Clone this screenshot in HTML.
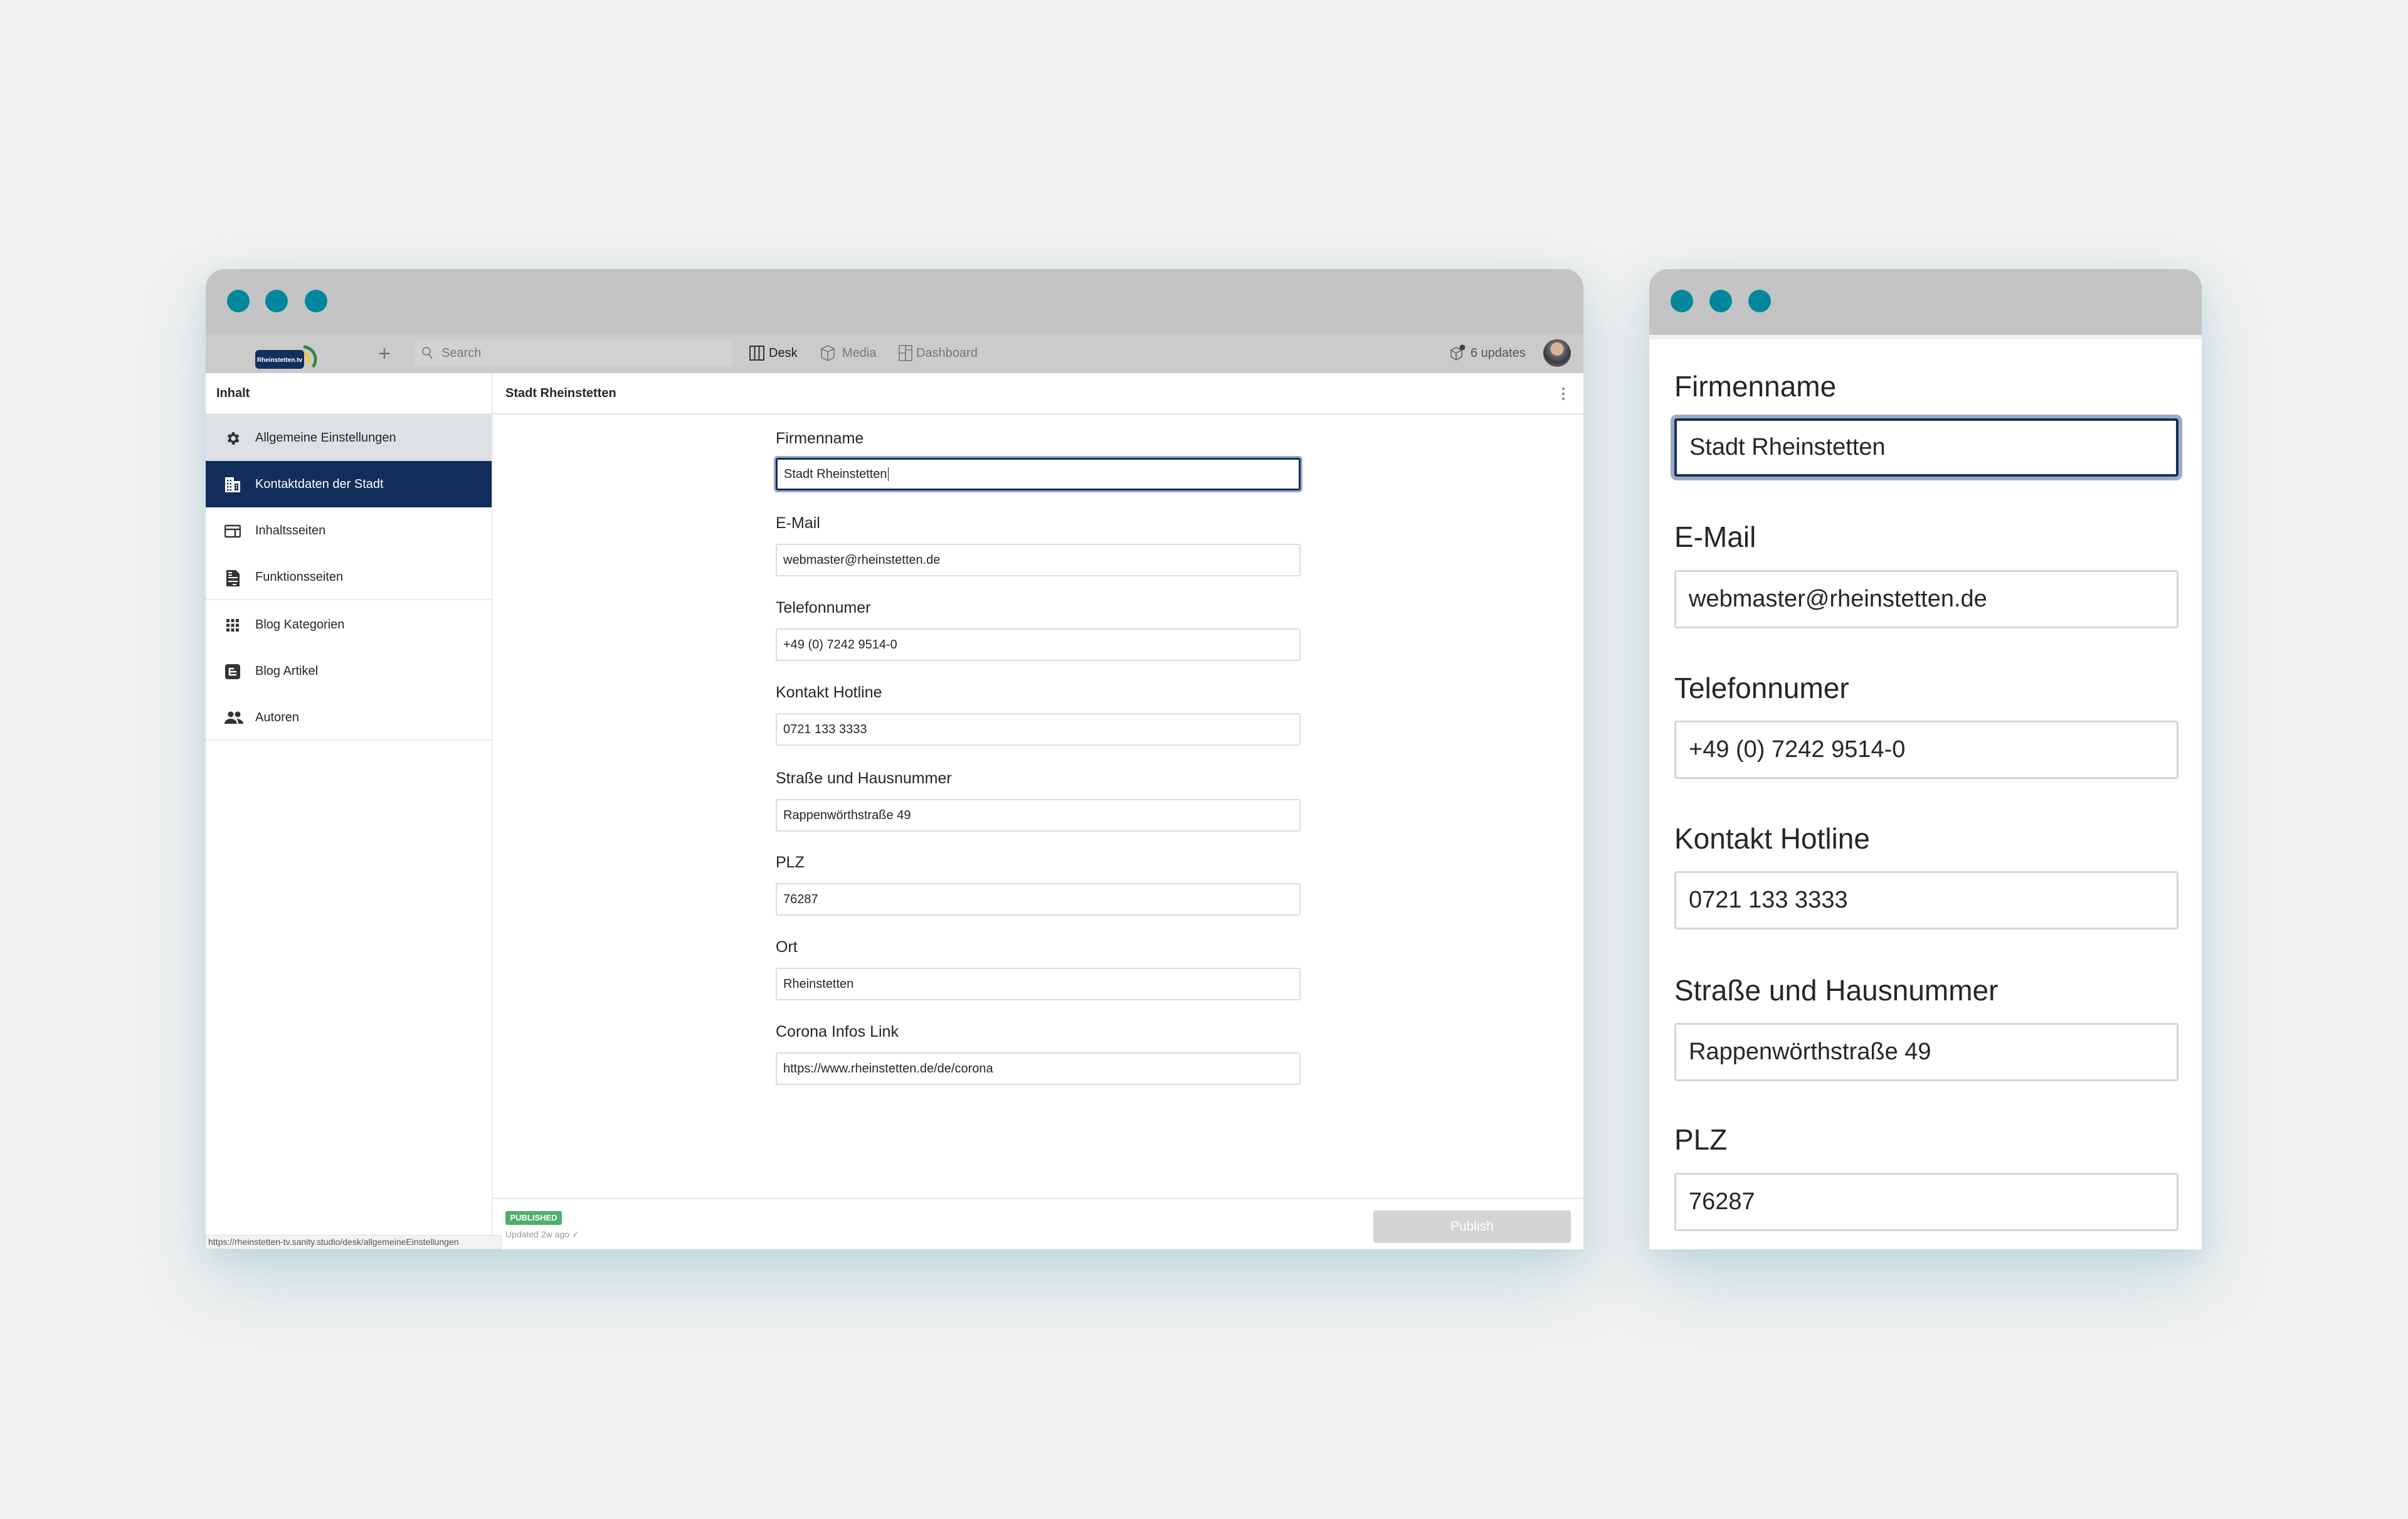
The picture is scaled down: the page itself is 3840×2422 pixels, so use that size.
<!DOCTYPE html>
<html><head><meta charset="utf-8"><style>
*{margin:0;padding:0;box-sizing:border-box}
body{width:3840px;height:2422px;background:#f1f1f1;font-family:"Liberation Sans",Arial,sans-serif;position:relative;overflow:hidden;color:#262626}
.win{position:absolute;background:#fff;border-radius:30px 30px 0 0;overflow:hidden;box-shadow:0 50px 110px rgba(150,195,205,.45),0 10px 40px rgba(150,195,205,.3)}
.tb{position:absolute;left:0;top:0;right:0;background:#c4c4c4}
.dot{position:absolute;width:36px;height:36px;border-radius:50%;background:#00879b;top:33px}
.abs{position:absolute}
.lbl{position:absolute;font-size:25px;color:#262626;left:909px}
.inp{position:absolute;left:909px;width:837px;height:52px;border:2px solid #dcdcdc;border-radius:3px;font-size:20px;padding-left:10px;line-height:48px;color:#262626}
.si{position:absolute;left:0;width:456px;height:74px;font-size:20px;line-height:74px;padding-left:79px;color:#262626}
.si svg{position:absolute;left:30px;top:25px}
.rl{position:absolute;left:40px;font-size:46px;color:#262626}
.ri{position:absolute;left:40px;width:804px;height:93px;border:3px solid #d6d6d6;border-radius:4px;font-size:38px;line-height:87px;padding-left:20px;color:#262626}
</style></head><body>

<!-- LEFT WINDOW -->
<div class="win" style="left:328px;top:429px;width:2197px;height:1563px">
  <div class="tb" style="height:104px"></div>
  <div class="dot" style="left:34px"></div>
  <div class="dot" style="left:95px"></div>
  <div class="dot" style="left:158px"></div>
  <!-- toolbar -->
  <div class="abs" style="left:0;top:104px;width:2197px;height:62px;background:#cbcbcb"></div>
  <!-- logo -->
  <svg class="abs" style="left:78px;top:112px" width="105" height="50" viewBox="0 0 105 50">
    <path d="M78 12 A20 20 0 0 1 93 44" fill="none" stroke="#2f8a4e" stroke-width="5"/>
    <path d="M76 20 A12 12 0 0 1 84 38" fill="none" stroke="#f0c93a" stroke-width="5"/>
    <rect x="1" y="17" width="78" height="30" rx="6" fill="#12305e"/>
    <circle cx="76" cy="23" r="3" fill="#12305e"/>
    <text x="40" y="36" font-size="10" font-weight="bold" fill="#fff" text-anchor="middle" font-family="Liberation Sans">Rheinstetten.tv</text>
  </svg>
  <div class="abs" style="left:275px;top:116px;font-size:34px;color:#777;font-weight:300">+</div>
  <div class="abs" style="left:333px;top:112px;width:507px;height:44px;background:#d2d2d2;border-radius:6px"></div>
  <svg class="abs" style="left:344px;top:123px" width="20" height="22" viewBox="0 0 20 22"><circle cx="8" cy="8" r="6" fill="none" stroke="#777" stroke-width="1.6"/><path d="M12 13l5 7" stroke="#777" stroke-width="1.6"/></svg>
  <div class="abs" style="left:376px;top:123px;font-size:20px;color:#777">Search</div>
  <svg class="abs" style="left:867px;top:122px" width="24" height="24" viewBox="0 0 24 24"><rect x="1" y="1" width="22" height="22" fill="none" stroke="#333" stroke-width="2"/><path d="M8.5 1v22M15.5 1v22" stroke="#333" stroke-width="2"/></svg>
  <div class="abs" style="left:898px;top:123px;font-size:20px;color:#222">Desk</div>
  <svg class="abs" style="left:981px;top:121px" width="22" height="26" viewBox="0 0 22 26"><path d="M11 1L21 6v14L11 25 1 20V6z M1 6l10 5 10-5 M11 11v14" fill="none" stroke="#777" stroke-width="1.6"/></svg>
  <div class="abs" style="left:1015px;top:123px;font-size:20px;color:#777">Media</div>
  <svg class="abs" style="left:1105px;top:121px" width="22" height="26" viewBox="0 0 22 26"><rect x="1" y="1" width="20" height="24" fill="none" stroke="#777" stroke-width="1.6"/><path d="M11 1v24M1 13h10M11 8h10" stroke="#777" stroke-width="1.6"/></svg>
  <div class="abs" style="left:1133px;top:123px;font-size:20px;color:#777">Dashboard</div>
  <svg class="abs" style="left:1984px;top:120px" width="26" height="28" viewBox="0 0 26 28"><path d="M10 5L19 9v11l-9 5-8-5V9z M2 9l8 5 9-5 M10 14v11" fill="none" stroke="#666" stroke-width="1.6"/><circle cx="20" cy="5" r="4.5" fill="#444"/></svg>
  <div class="abs" style="left:2017px;top:123px;font-size:20px;color:#555">6 updates</div>
  <div class="abs" style="left:2133px;top:112px;width:44px;height:44px;border-radius:50%;background:radial-gradient(circle at 50% 35%,#d9b49b 0 28%,#6b6b6b 30%,#3a3a44 60%,#888 100%)"></div>

  <!-- header row -->
  <div class="abs" style="left:0;top:166px;width:2197px;height:66px;border-bottom:2px solid #e6e6e6"></div>
  <div class="abs" style="left:17px;top:187px;font-size:20px;font-weight:bold">Inhalt</div>
  <div class="abs" style="left:478px;top:187px;font-size:20px;font-weight:bold">Stadt Rheinstetten</div>
  <div class="abs" style="left:2163px;top:189px;width:4px;height:4px;border-radius:50%;background:#888;box-shadow:0 8px 0 #888,0 16px 0 #888"></div>
  <!-- sidebar -->
  <div class="abs" style="left:456px;top:166px;width:2px;height:1397px;background:#ececec"></div>
  <div class="si" style="top:232px;background:#dde0e5">
    <svg width="26" height="26" viewBox="0 0 24 24"><path fill="#333" d="M19.4 13a7.5 7.5 0 0 0 0-2l2.1-1.6-2-3.5-2.5 1a7 7 0 0 0-1.7-1L15 3h-4l-.4 2.7a7 7 0 0 0-1.7 1l-2.5-1-2 3.5L6.6 11a7.5 7.5 0 0 0 0 2l-2.1 1.6 2 3.5 2.5-1a7 7 0 0 0 1.7 1L11 21h4l.4-2.7a7 7 0 0 0 1.7-1l2.5 1 2-3.5zM13 15.5a3.5 3.5 0 1 1 0-7 3.5 3.5 0 0 1 0 7z"/></svg>Allgemeine Einstellungen</div>
  <div class="si" style="top:306px;background:#112e5a;color:#fff">
    <svg width="26" height="26" viewBox="0 0 26 26"><path fill="#fff" d="M1 1h14v6h10v18H1z"/><g fill="#112e5a"><rect x="4" y="5" width="2.5" height="2.5"/><rect x="8.5" y="5" width="2.5" height="2.5"/><rect x="4" y="10" width="2.5" height="2.5"/><rect x="8.5" y="10" width="2.5" height="2.5"/><rect x="4" y="15" width="2.5" height="2.5"/><rect x="8.5" y="15" width="2.5" height="2.5"/><rect x="4" y="20" width="2.5" height="2.5"/><rect x="8.5" y="20" width="2.5" height="2.5"/><rect x="16" y="11" width="6" height="11"/></g><rect x="18" y="13" width="2" height="2" fill="#fff"/><rect x="18" y="17" width="2" height="2" fill="#fff"/></svg>Kontaktdaten der Stadt</div>
  <div class="si" style="top:380px"><svg width="26" height="26" viewBox="0 0 26 26"><rect x="1" y="4" width="24" height="18" rx="2" fill="none" stroke="#333" stroke-width="2.5"/><path d="M1 10h24M17 10v12" stroke="#333" stroke-width="2.5"/></svg>Inhaltsseiten</div>
  <div class="si" style="top:454px;border-bottom:2px solid #ececec"><svg width="26" height="28" viewBox="0 0 26 28"><path fill="#333" d="M3 1h15l6 6v20H3z"/><g fill="#fff"><rect x="6" y="4" width="6" height="2"/><rect x="6" y="8" width="6" height="2"/><rect x="6" y="12" width="15" height="2"/><rect x="6" y="18" width="15" height="2"/><rect x="13" y="23" width="6" height="2"/></g></svg>Funktionsseiten</div>
  <div class="si" style="top:530px"><svg width="26" height="26" viewBox="0 0 26 26"><g fill="#333"><rect x="3" y="3" width="5" height="5"/><rect x="10.5" y="3" width="5" height="5"/><rect x="18" y="3" width="5" height="5"/><rect x="3" y="10.5" width="5" height="5"/><rect x="10.5" y="10.5" width="5" height="5"/><rect x="18" y="10.5" width="5" height="5"/><rect x="3" y="18" width="5" height="5"/><rect x="10.5" y="18" width="5" height="5"/><rect x="18" y="18" width="5" height="5"/></g></svg>Blog Kategorien</div>
  <div class="si" style="top:604px"><svg width="26" height="26" viewBox="0 0 26 26"><rect x="1" y="1" width="24" height="24" rx="4" fill="#333"/><path d="M8 8h6M8 13h10a3 3 0 0 1 0 0M8 18h10" stroke="#fff" stroke-width="2.6" stroke-linecap="round"/><path d="M8 8v10" stroke="#fff" stroke-width="2.6"/></svg>Blog Artikel</div>
  <div class="si" style="top:678px;border-bottom:2px solid #ececec"><svg width="30" height="26" viewBox="0 0 30 26"><circle cx="10" cy="7" r="4.5" fill="#333"/><circle cx="21" cy="7" r="4.5" fill="#333"/><path d="M0 22c0-5 5-8 10-8s10 3 10 8z M19 14c5 0 11 3 11 8h-8c0-3-1-6-3-8z" fill="#333"/></svg>Autoren</div>

  <!-- form -->
  <div class="lbl" style="top:256px">Firmenname</div>
  <div class="inp" style="top:301px;border:3px solid #12305e;box-shadow:0 0 0 3px #9eabbe;line-height:46px">Stadt Rheinstetten<span style="border-left:1.5px solid #222;margin-left:1px"></span></div>
  <div class="lbl" style="top:391px">E-Mail</div>
  <div class="inp" style="top:438px">webmaster@rheinstetten.de</div>
  <div class="lbl" style="top:526px">Telefonnumer</div>
  <div class="inp" style="top:573px">+49 (0) 7242 9514-0</div>
  <div class="lbl" style="top:661px">Kontakt Hotline</div>
  <div class="inp" style="top:708px">0721 133 3333</div>
  <div class="lbl" style="top:798px">Straße und Hausnummer</div>
  <div class="inp" style="top:845px">Rappenwörthstraße 49</div>
  <div class="lbl" style="top:932px">PLZ</div>
  <div class="inp" style="top:979px">76287</div>
  <div class="lbl" style="top:1067px">Ort</div>
  <div class="inp" style="top:1114px">Rheinstetten</div>
  <div class="lbl" style="top:1202px">Corona Infos Link</div>
  <div class="inp" style="top:1249px">https://www.rheinstetten.de/de/corona</div>

  <!-- footer -->
  <div class="abs" style="left:458px;top:1480px;width:1739px;height:3px;background:#ececec"></div>
  <div class="abs" style="left:478px;top:1502px;width:90px;height:22px;background:#4fb069;border-radius:3px;color:#fff;font-size:13px;font-weight:bold;line-height:22px;text-align:center">PUBLISHED</div>
  <div class="abs" style="left:478px;top:1531px;font-size:14px;color:#999">Updated 2w ago ✓</div>
  <div class="abs" style="left:1862px;top:1501px;width:315px;height:52px;background:#d4d4d4;border-radius:4px;color:#fff;font-size:21px;text-align:center;line-height:52px">Publish</div>
  <div class="abs" style="left:0;top:1540px;width:472px;height:23px;background:#f3f3f3;border:1px solid #ddd;font-size:14px;color:#555;line-height:21px;padding-left:3px;white-space:nowrap;overflow:hidden">https://rheinstetten-tv.sanity.studio/desk/allgemeineEinstellungen</div>
</div>

<!-- RIGHT WINDOW -->
<div class="win" style="left:2630px;top:429px;width:881px;height:1563px">
  <div class="tb" style="height:105px"></div>
  <div class="abs" style="left:0;top:105px;width:881px;height:7px;background:#f1f1f1"></div>
  <div class="dot" style="left:34px"></div>
  <div class="dot" style="left:96px"></div>
  <div class="dot" style="left:158px"></div>
  <div class="rl" style="top:160px">Firmenname</div>
  <div class="ri" style="top:238px;border:4px solid #12305e;box-shadow:0 0 0 6px #9eabbe;line-height:85px">Stadt Rheinstetten</div>
  <div class="rl" style="top:400px">E-Mail</div>
  <div class="ri" style="top:480px">webmaster@rheinstetten.de</div>
  <div class="rl" style="top:641px">Telefonnumer</div>
  <div class="ri" style="top:720px">+49 (0) 7242 9514-0</div>
  <div class="rl" style="top:881px">Kontakt Hotline</div>
  <div class="ri" style="top:960px">0721 133 3333</div>
  <div class="rl" style="top:1123px">Straße und Hausnummer</div>
  <div class="ri" style="top:1202px">Rappenwörthstraße 49</div>
  <div class="rl" style="top:1361px">PLZ</div>
  <div class="ri" style="top:1441px">76287</div>
</div>
</body></html>
